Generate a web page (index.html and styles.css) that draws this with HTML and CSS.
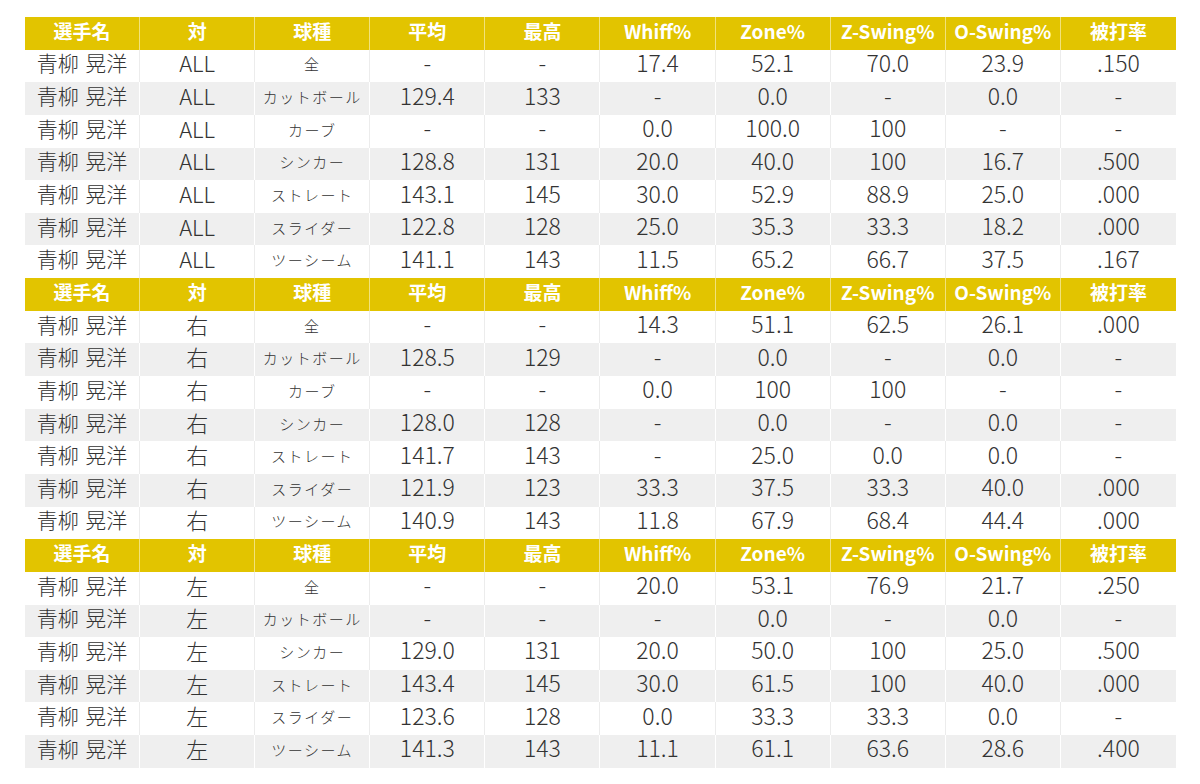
FILE: index.html
```html
<!DOCTYPE html>
<html lang="ja">
<head>
<meta charset="utf-8">
<link rel="stylesheet" href="styles.css">
</head>
<body>
<div class="sheet">
  <div class="row head"><div>選手名</div><div>対</div><div>球種</div><div>平均</div><div>最高</div><div>Whiff%</div><div>Zone%</div><div>Z-Swing%</div><div>O-Swing%</div><div>被打率</div></div>
  <div class="row"><div class="nm">青柳 晃洋</div><div class="vs">ALL</div><div class="pt">全</div><div>-</div><div>-</div><div>17.4</div><div>52.1</div><div>70.0</div><div>23.9</div><div>.150</div></div>
  <div class="row alt"><div class="nm">青柳 晃洋</div><div class="vs">ALL</div><div class="pt">カットボール</div><div>129.4</div><div>133</div><div>-</div><div>0.0</div><div>-</div><div>0.0</div><div>-</div></div>
  <div class="row"><div class="nm">青柳 晃洋</div><div class="vs">ALL</div><div class="pt">カーブ</div><div>-</div><div>-</div><div>0.0</div><div>100.0</div><div>100</div><div>-</div><div>-</div></div>
  <div class="row alt"><div class="nm">青柳 晃洋</div><div class="vs">ALL</div><div class="pt">シンカー</div><div>128.8</div><div>131</div><div>20.0</div><div>40.0</div><div>100</div><div>16.7</div><div>.500</div></div>
  <div class="row"><div class="nm">青柳 晃洋</div><div class="vs">ALL</div><div class="pt">ストレート</div><div>143.1</div><div>145</div><div>30.0</div><div>52.9</div><div>88.9</div><div>25.0</div><div>.000</div></div>
  <div class="row alt"><div class="nm">青柳 晃洋</div><div class="vs">ALL</div><div class="pt">スライダー</div><div>122.8</div><div>128</div><div>25.0</div><div>35.3</div><div>33.3</div><div>18.2</div><div>.000</div></div>
  <div class="row"><div class="nm">青柳 晃洋</div><div class="vs">ALL</div><div class="pt">ツーシーム</div><div>141.1</div><div>143</div><div>11.5</div><div>65.2</div><div>66.7</div><div>37.5</div><div>.167</div></div>

  <div class="row head"><div>選手名</div><div>対</div><div>球種</div><div>平均</div><div>最高</div><div>Whiff%</div><div>Zone%</div><div>Z-Swing%</div><div>O-Swing%</div><div>被打率</div></div>
  <div class="row"><div class="nm">青柳 晃洋</div><div class="vs">右</div><div class="pt">全</div><div>-</div><div>-</div><div>14.3</div><div>51.1</div><div>62.5</div><div>26.1</div><div>.000</div></div>
  <div class="row alt"><div class="nm">青柳 晃洋</div><div class="vs">右</div><div class="pt">カットボール</div><div>128.5</div><div>129</div><div>-</div><div>0.0</div><div>-</div><div>0.0</div><div>-</div></div>
  <div class="row"><div class="nm">青柳 晃洋</div><div class="vs">右</div><div class="pt">カーブ</div><div>-</div><div>-</div><div>0.0</div><div>100</div><div>100</div><div>-</div><div>-</div></div>
  <div class="row alt"><div class="nm">青柳 晃洋</div><div class="vs">右</div><div class="pt">シンカー</div><div>128.0</div><div>128</div><div>-</div><div>0.0</div><div>-</div><div>0.0</div><div>-</div></div>
  <div class="row"><div class="nm">青柳 晃洋</div><div class="vs">右</div><div class="pt">ストレート</div><div>141.7</div><div>143</div><div>-</div><div>25.0</div><div>0.0</div><div>0.0</div><div>-</div></div>
  <div class="row alt"><div class="nm">青柳 晃洋</div><div class="vs">右</div><div class="pt">スライダー</div><div>121.9</div><div>123</div><div>33.3</div><div>37.5</div><div>33.3</div><div>40.0</div><div>.000</div></div>
  <div class="row"><div class="nm">青柳 晃洋</div><div class="vs">右</div><div class="pt">ツーシーム</div><div>140.9</div><div>143</div><div>11.8</div><div>67.9</div><div>68.4</div><div>44.4</div><div>.000</div></div>

  <div class="row head"><div>選手名</div><div>対</div><div>球種</div><div>平均</div><div>最高</div><div>Whiff%</div><div>Zone%</div><div>Z-Swing%</div><div>O-Swing%</div><div>被打率</div></div>
  <div class="row"><div class="nm">青柳 晃洋</div><div class="vs">左</div><div class="pt">全</div><div>-</div><div>-</div><div>20.0</div><div>53.1</div><div>76.9</div><div>21.7</div><div>.250</div></div>
  <div class="row alt"><div class="nm">青柳 晃洋</div><div class="vs">左</div><div class="pt">カットボール</div><div>-</div><div>-</div><div>-</div><div>0.0</div><div>-</div><div>0.0</div><div>-</div></div>
  <div class="row"><div class="nm">青柳 晃洋</div><div class="vs">左</div><div class="pt">シンカー</div><div>129.0</div><div>131</div><div>20.0</div><div>50.0</div><div>100</div><div>25.0</div><div>.500</div></div>
  <div class="row alt"><div class="nm">青柳 晃洋</div><div class="vs">左</div><div class="pt">ストレート</div><div>143.4</div><div>145</div><div>30.0</div><div>61.5</div><div>100</div><div>40.0</div><div>.000</div></div>
  <div class="row"><div class="nm">青柳 晃洋</div><div class="vs">左</div><div class="pt">スライダー</div><div>123.6</div><div>128</div><div>0.0</div><div>33.3</div><div>33.3</div><div>0.0</div><div>-</div></div>
  <div class="row alt"><div class="nm">青柳 晃洋</div><div class="vs">左</div><div class="pt">ツーシーム</div><div>141.3</div><div>143</div><div>11.1</div><div>61.1</div><div>63.6</div><div>28.6</div><div>.400</div></div>
</div>
</body>
</html>
```

FILE: styles.css
```css
html, body {
  margin: 0;
  padding: 0;
  background: #ffffff;
}
body {
  padding: 17px 0 0 25px;
  font-family: "Noto Sans CJK JP Light", "Noto Sans CJK JP", "Noto Sans", sans-serif;
  color: #333333;
}
.sheet {
  width: 1151px;
  display: flex;
  flex-direction: column;
}
.row {
  display: grid;
  grid-template-columns: repeat(10, 1fr);
  height: 32.65px;
  background: #ffffff;
}
.row > div {
  display: flex;
  align-items: center;
  justify-content: center;
  box-sizing: border-box;
  padding-bottom: 7px;
  font-size: 23px;
  font-weight: 300;
  line-height: 1;
  border-right: 1px solid #ececec;
  white-space: nowrap;
}
.row > div:last-child {
  border-right: none;
}
.row.alt {
  background: #efefef;
}
.row.alt > div {
  border-right-color: #ffffff;
}
.row > div.nm {
  font-size: 21px;
  padding-bottom: 6px;
  word-spacing: 2px;
}
.row > div.vs {
  font-size: 22px;
}
.row > div.pt {
  font-size: 15px;
  letter-spacing: 1.5px;
  padding-bottom: 4px;
}
.row.head {
  background: #e2c400;
}
.row.head > div {
  font-family: "Noto Sans CJK JP", "Noto Sans", sans-serif;
  color: #ffffff;
  font-weight: 700;
  font-size: 19px;
  padding-bottom: 6px;
  border-right: 1px solid #f2e27a;
}
.row.head > div:last-child {
  border-right: none;
}
```
